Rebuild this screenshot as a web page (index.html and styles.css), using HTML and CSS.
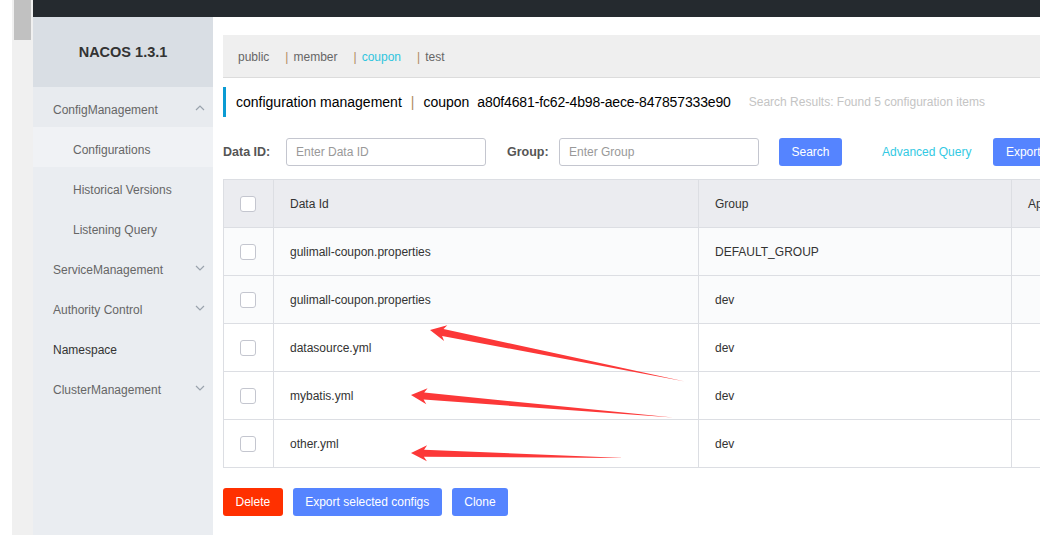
FILE: index.html
```html
<!DOCTYPE html>
<html>
<head>
<meta charset="utf-8">
<title>Nacos</title>
<link rel="stylesheet" href="styles.css">
</head>
<body>
<div class="page">
  <div class="gutter"></div>
  <div class="scroll"><div class="thumb"></div></div>
  <div class="app">
    <div class="topbar"></div>
    <div class="body">
      <aside class="sidebar">
        <div class="logo">NACOS 1.3.1</div>
        <div class="menu-item open">ConfigManagement
          <svg class="chev" width="10" height="6" viewBox="0 0 10 6"><polyline points="1,5 5,1 9,5" fill="none" stroke="#9aa3ad" stroke-width="1.2"/></svg>
        </div>
        <div class="sub-item active">Configurations</div>
        <div class="sub-item">Historical Versions</div>
        <div class="sub-item">Listening Query</div>
        <div class="menu-item">ServiceManagement
          <svg class="chev" width="10" height="6" viewBox="0 0 10 6"><polyline points="1,1 5,5 9,1" fill="none" stroke="#9aa3ad" stroke-width="1.2"/></svg>
        </div>
        <div class="menu-item">Authority Control
          <svg class="chev" width="10" height="6" viewBox="0 0 10 6"><polyline points="1,1 5,5 9,1" fill="none" stroke="#9aa3ad" stroke-width="1.2"/></svg>
        </div>
        <div class="menu-item dark">Namespace</div>
        <div class="menu-item">ClusterManagement
          <svg class="chev" width="10" height="6" viewBox="0 0 10 6"><polyline points="1,1 5,5 9,1" fill="none" stroke="#9aa3ad" stroke-width="1.2"/></svg>
        </div>
      </aside>
      <main class="main">
        <div class="ns-bar">
          <span class="ns">public</span>
          <span class="sep">|</span><span class="ns">member</span>
          <span class="sep">|</span><span class="ns current">coupon</span>
          <span class="sep">|</span><span class="ns">test</span>
        </div>
        <div class="title">
          <span class="title-text">configuration management</span>
          <span class="title-sep">|</span>
          <span class="title-text">coupon</span>
          <span class="title-text uuid">a80f4681-fc62-4b98-aece-847857333e90</span>
          <span class="result">Search Results: Found 5 configuration items</span>
        </div>
        <div class="search">
          <label class="lbl lbl-id">Data ID:</label>
          <div class="input">Enter Data ID</div>
          <label class="lbl lbl-group">Group:</label>
          <div class="input">Enter Group</div>
          <button class="btn primary search-btn">Search</button>
          <a class="adv">Advanced Query</a>
          <button class="btn primary">Export query results</button>
        </div>
        <div class="table">
          <div class="row head">
            <div class="cell cb"><span class="check"></span></div>
            <div class="cell">Data Id</div>
            <div class="cell">Group</div>
            <div class="cell">Application</div>
          </div>
          <div class="row tint">
            <div class="cell cb"><span class="check"></span></div>
            <div class="cell">gulimall-coupon.properties</div>
            <div class="cell">DEFAULT_GROUP</div>
            <div class="cell"></div>
          </div>
          <div class="row tint">
            <div class="cell cb"><span class="check"></span></div>
            <div class="cell">gulimall-coupon.properties</div>
            <div class="cell">dev</div>
            <div class="cell"></div>
          </div>
          <div class="row">
            <div class="cell cb"><span class="check"></span></div>
            <div class="cell">datasource.yml</div>
            <div class="cell">dev</div>
            <div class="cell"></div>
          </div>
          <div class="row">
            <div class="cell cb"><span class="check"></span></div>
            <div class="cell">mybatis.yml</div>
            <div class="cell">dev</div>
            <div class="cell"></div>
          </div>
          <div class="row">
            <div class="cell cb"><span class="check"></span></div>
            <div class="cell">other.yml</div>
            <div class="cell">dev</div>
            <div class="cell"></div>
          </div>
        </div>
        <div class="actions">
          <button class="btn danger">Delete</button>
          <button class="btn primary">Export selected configs</button>
          <button class="btn primary">Clone</button>
        </div>
      </main>
    </div>
  </div>
</div>
<svg class="arrows" width="1040" height="535" viewBox="0 0 1040 535">
  <polygon fill="#fc3838" points="430,330 447.3,325.3 443.5,329.1 685,381.5 442.1,335.9 444.1,341"/>
  <polygon fill="#fc3838" points="411,395 427.6,388.3 424.2,392.6 673,417.5 423.6,399.6 426.3,404.3"/>
  <polygon fill="#fc3838" points="411,453 427.1,445.3 424.1,449.7 625,458 423.9,456.7 426.9,461.3"/>
</svg>
</body>
</html>
```

FILE: styles.css
```css
* { box-sizing: border-box; }
html, body {
  margin: 0;
  padding: 0;
  width: 1040px;
  height: 535px;
  overflow: hidden;
  background: #fff;
  font-family: "Liberation Sans", Arial, sans-serif;
  font-size: 12px;
  color: #333;
}
.page {
  display: flex;
  height: 535px;
}
.gutter { width: 12px; flex: none; background: #fff; }
.scroll {
  width: 21px;
  flex: none;
  background: #f0f0f0;
  padding-left: 2px;
}
.thumb { width: 17px; height: 40px; background: #c1c1c1; }
.app {
  flex: 1;
  display: flex;
  flex-direction: column;
  min-width: 0;
}
.topbar { height: 17px; background: #252a2f; flex: none; }
.body { flex: 1; display: flex; min-height: 0; }
.sidebar {
  width: 180px;
  flex: none;
  background: #eaedf1;
}
.logo {
  height: 70px;
  background: #d9dee4;
  display: flex;
  align-items: center;
  justify-content: center;
  font-weight: bold;
  font-size: 14.5px;
  color: #333;
}
.menu-item, .sub-item {
  height: 40px;
  display: flex;
  align-items: center;
  padding-top: 5px;
  color: #666;
  position: relative;
}
.menu-item { padding-left: 20px; }
.menu-item.open { background: #e8ebef; }
.menu-item.dark { color: #333; }
.sub-item { padding-left: 40px; }
.sub-item.active { background: #f0f2f5; }
.chev { position: absolute; left: 162px; top: 18px; }

.main {
  flex: 1;
  min-width: 0;
  overflow: hidden;
  padding: 18px 0 0 10px;
}
.ns-bar {
  height: 43px;
  background: #efefef;
  border-bottom: 1px solid #dcdcdc;
  padding-left: 15px;
  padding-top: 2px;
  display: flex;
  align-items: center;
  white-space: nowrap;
  color: #666;
}
.ns { margin-right: 16px; }
.ns.current { color: #2fc5de; }
.sep { margin-right: 5px; color: #b08a60; }
.title {
  margin-top: 9px;
  height: 30px;
  border-left: 3px solid #0b9bd3;
  padding-left: 10px;
  display: flex;
  align-items: center;
  white-space: nowrap;
}
.title-text { font-size: 14px; color: #000; margin-right: 8px; }
.title-text.uuid { letter-spacing: -0.14px; }
.title-sep { font-size: 14px; color: #b08a60; margin-right: 9px; margin-left: 1px; }
.result { color: #c4c4c4; margin-left: 10px; }
.search {
  margin-top: 21px;
  height: 28px;
  display: flex;
  align-items: center;
  white-space: nowrap;
}
.lbl { font-weight: bold; color: #555; font-size: 12.5px; }
.lbl-id { width: 63px; flex: none; }
.lbl-group { width: 52px; flex: none; }
.input {
  width: 200px;
  height: 28px;
  flex: none;
  border: 1px solid #c4c6cf;
  border-radius: 3px;
  padding-left: 9px;
  display: flex;
  align-items: center;
  color: #999;
  margin-right: 21px;
}
.btn {
  height: 28px;
  border: none;
  border-radius: 3px;
  padding: 0 12.5px;
  color: #fff;
  font-family: "Liberation Sans", Arial, sans-serif;
  font-size: 12px;
  flex: none;
}
.primary { background: #5584ff; }
.danger { background: #ff3000; }
.search-btn { margin-left: -1px; }
.adv { color: #33c9e3; margin-left: 40px; margin-right: 22px; }
.table {
  margin-top: 13px;
  width: 1100px;
  border-top: 1px solid #dcdee3;
  border-left: 1px solid #dcdee3;
}
.row {
  display: grid;
  grid-template-columns: 50px 425px 313px 311px;
  height: 48px;
  border-bottom: 1px solid #dcdee3;
  background: #fff;
}
.row.head { background: #ebecf0; }
.row.tint { background: #fafbfc; }
.cell {
  border-right: 1px solid #dcdee3;
  display: flex;
  align-items: center;
  padding-left: 16px;
  white-space: nowrap;
  color: #333;
}
.check {
  width: 16px;
  height: 16px;
  border: 1px solid #c4c6cf;
  border-radius: 3px;
  background: #fff;
}
.actions {
  margin-top: 20px;
  display: flex;
  gap: 10px;
}
.arrows {
  position: absolute;
  left: 0;
  top: 0;
  pointer-events: none;
}
```
